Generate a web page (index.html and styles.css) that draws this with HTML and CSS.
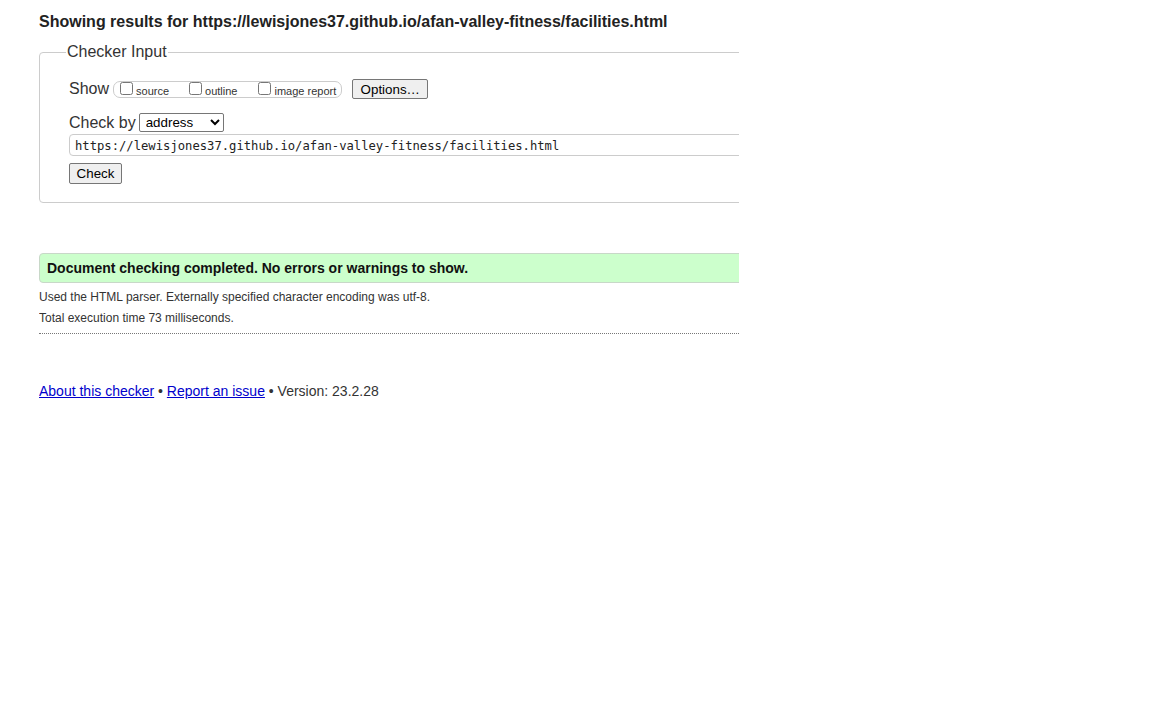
FILE: index.html
```html
<!DOCTYPE html>
<html>
<head>
<meta charset="utf-8">
<title>Showing results for facilities.html - Nu Html Checker</title>
<link rel="stylesheet" href="styles.css">
</head>
<body>
<div class="page">
  <h2 class="title">Showing results for https://lewisjones37.github.io/afan-valley-fitness/facilities.html</h2>
  <fieldset class="checker">
    <legend>Checker Input</legend>
    <div class="row show-row">
      <span class="lbl">Show</span>
      <span class="group">
        <label class="opt"><input type="checkbox"><span>source</span></label>
        <label class="opt"><input type="checkbox"><span>outline</span></label>
        <label class="opt"><input type="checkbox"><span>image report</span></label>
      </span>
      <button class="btn opts">Options…</button>
    </div>
    <div class="row by-row">
      <span class="lbl">Check by</span>
      <select class="sel"><option>address</option></select>
    </div>
    <input class="url" type="text" value="https://lewisjones37.github.io/afan-valley-fitness/facilities.html">
    <button class="btn check">Check</button>
  </fieldset>
  <p class="success">Document checking completed. No errors or warnings to show.</p>
  <p class="details">Used the HTML parser. Externally specified character encoding was utf-8.</p>
  <p class="details">Total execution time 73 milliseconds.</p>
  <hr class="dots">
  <p class="footer"><a href="#">About this checker</a> • <a href="#">Report an issue</a> • Version: 23.2.28</p>
</div>
</body>
</html>
```
FILE: styles.css
```css
html, body {
  margin: 0;
  padding: 0;
  background: #fff;
}
body {
  font-family: "Liberation Sans", Arial, sans-serif;
  color: #222;
}
.page {
  width: 700px;
  margin-left: 39px;
  overflow: hidden;
  padding-top: 12px;
}
.title {
  font-size: 16px;
  font-weight: bold;
  margin: 0 0 12px 0;
  white-space: nowrap;
  color: #222;
  line-height: 19px;
}
.checker {
  width: 760px;
  margin: 0;
  padding: 8px 29px 18px 29px;
  border: 1px solid #ccc;
  border-radius: 4px;
  box-sizing: border-box;
}
.checker legend {
  font-size: 16px;
  color: #333;
  padding: 0 1px;
  margin-left: -3px;
  line-height: 18px;
}
.row {
  display: flex;
  align-items: center;
}
.lbl {
  font-size: 16px;
  color: #333;
}
.show-row {
  margin-top: 10px;
  height: 20px;
}
.group {
  display: inline-flex;
  align-items: center;
  margin-left: 4px;
  border: 1px solid #ccc;
  border-radius: 7px;
  height: 17px;
  padding: 0 5px 0 6px;
  box-sizing: border-box;
  white-space: nowrap;
  flex: none;
}
.opt {
  display: inline-flex;
  align-items: center;
  font-size: 11px;
  color: #333;
  margin-right: 20px;
  white-space: nowrap;
  flex: none;
}
.opt:nth-child(2) { margin-right: 21px; }
.opt:last-child { margin-right: 0; }
.opt input {
  width: 13px;
  height: 13px;
  margin: 0 3px 0 0;
  position: relative;
  top: -1px;
}
.opt span { position: relative; top: 2px; }
.btn {
  font-family: "Liberation Sans", Arial, sans-serif;
  font-size: 13.333px;
  color: #000;
  background: #efefef;
  border: 1px solid #767676;
  border-radius: 2px;
  padding: 1px 6px;
  height: 20px;
  box-sizing: border-box;
  flex: none;
}
.opts {
  margin-left: 10px;
  width: 76px;
}
.by-row {
  margin-top: 14px;
}
.sel {
  margin-left: 3px;
  width: 85px;
  height: 19px;
  font-family: "Liberation Sans", Arial, sans-serif;
  font-size: 13.333px;
  border: 1px solid #767676;
  border-radius: 2px;
  padding: 0 0 0 2px;
  background: #fff;
  color: #000;
}
.url {
  display: block;
  margin-top: 2px;
  width: 700px;
  height: 22px;
  box-sizing: border-box;
  border: 1px solid #ccc;
  border-radius: 4px;
  font-family: "DejaVu Sans Mono", "Liberation Mono", monospace;
  font-size: 12.2px;
  padding: 1px 5px 0 5px;
  color: #222;
}
.check {
  display: block;
  margin-top: 7px;
  width: 53px;
  height: 21px;
}
.success {
  margin: 50px 0 0 0;
  width: 760px;
  background: #ccffcc;
  border: 1px solid #c8d8c8;
  border-radius: 4px;
  font-size: 14px;
  font-weight: bold;
  color: #111;
  padding: 6px 7px;
  line-height: 16px;
  box-sizing: border-box;
}
.details {
  margin: 7px 0 0 0;
  font-size: 12px;
  color: #333;
  line-height: 15px;
}
.details + .details { margin-top: 6px; }
.dots {
  margin: 7px 0 0 0;
  border: 0;
  border-top: 1px dotted #777;
  height: 0;
}
.footer {
  margin: 49px 0 0 0;
  font-size: 14px;
  color: #333;
  line-height: 16px;
}
.footer a {
  color: #0000cc;
}
```
